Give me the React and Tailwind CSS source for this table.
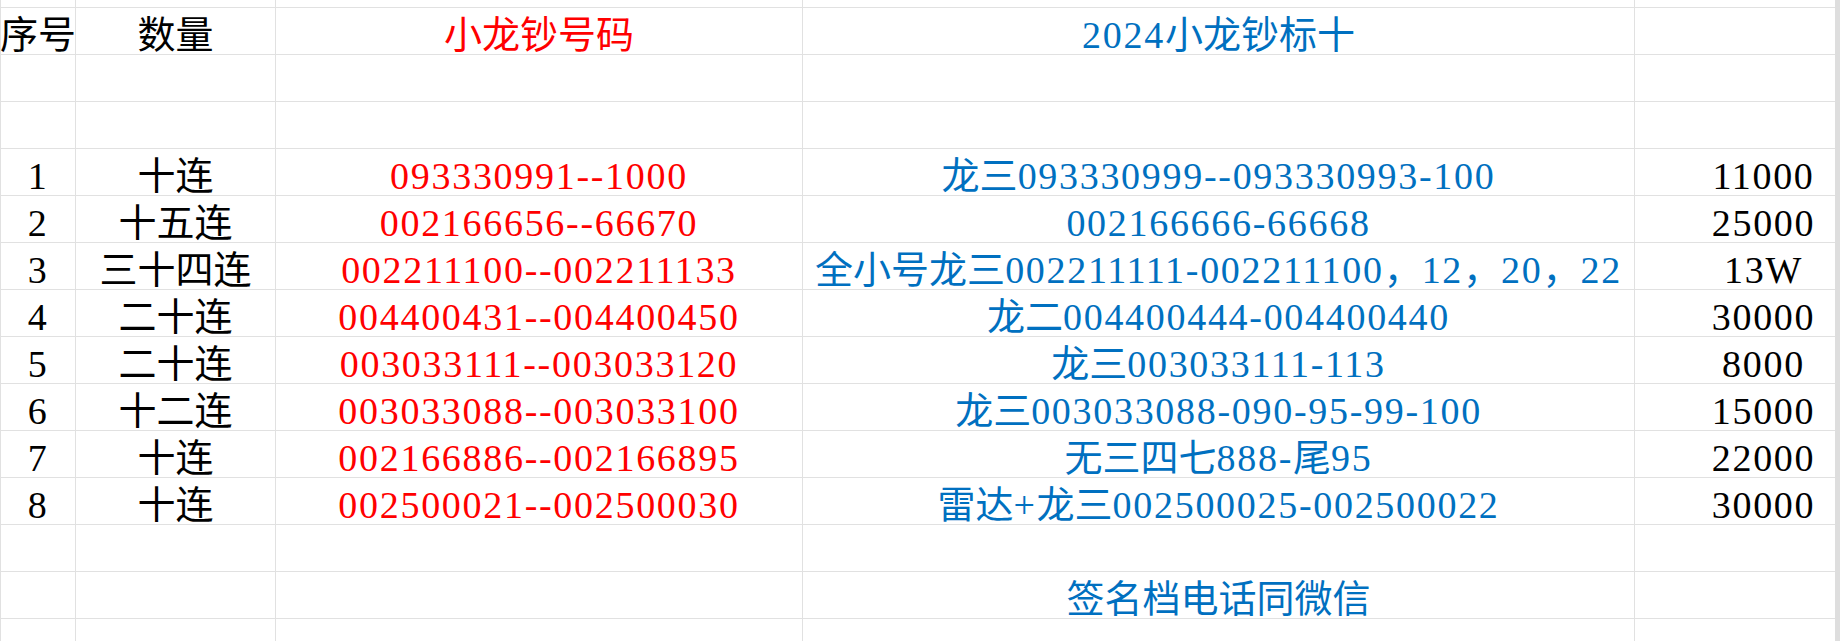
import React from "react";

const RED = "text-[#ff0000]";
const BLUE = "text-[#0070c0]";
const BLACK = "text-black";

// widths of the sheet columns (border-box, right border included)
const cols = ["w-[76px] border-l", "w-[200px]", "w-[527px]", "w-[832px]", "w-[258px]"];

const rows = [
  ["1", "十连", "093330991--1000", "龙三093330999--093330993-100", "11000"],
  ["2", "十五连", "002166656--66670", "002166666-66668", "25000"],
  ["3", "三十四连", "002211100--002211133", "全小号龙三002211111-002211100，12，20，22", "13W"],
  ["4", "二十连", "004400431--004400450", "龙二004400444-004400440", "30000"],
  ["5", "二十连", "003033111--003033120", "龙三003033111-113", "8000"],
  ["6", "十二连", "003033088--003033100", "龙三003033088-090-95-99-100", "15000"],
  ["7", "十连", "002166886--002166895", "无三四七888-尾95", "22000"],
  ["8", "十连", "002500021--002500030", "雷达+龙三002500025-002500022", "30000"],
];

// ascii runs get a little tracking so the digits sit as wide as the sheet's half-width ones
const Txt = ({ text }) => {
  const parts = text.split(/([\x00-\x7F]+)/).filter(Boolean);
  return parts.map((p, i) =>
    /^[\x00-\x7F]+$/.test(p) ? (
      <span key={i} className="tracking-[1.7px]">
        {p}
      </span>
    ) : (
      <span key={i}>{p}</span>
    )
  );
};

const Row = ({ cells = [], colors = [], h = "h-[47px]" }) => (
  <div className={`flex ${h} border-b border-[#e1e1e1]`}>
    {cols.map((w, i) => (
      <div
        key={i}
        className={`${w} shrink-0 border-r border-[#e1e1e1] flex items-end justify-center whitespace-nowrap ${colors[i] || BLACK}`}
      >
        {cells[i] ? (
          <div className="leading-[38px]">
            <Txt text={cells[i]} />
          </div>
        ) : null}
      </div>
    ))}
  </div>
);

export default function App() {
  return (
    <div className="flex h-[641px] w-[1840px] overflow-hidden bg-white font-['Liberation_Serif','Noto_Sans_CJK_SC',serif] text-[38px]">
      <div className="flex-1 overflow-hidden">
        <Row h="h-[8px]" />
        <Row cells={["序号", "数量", "小龙钞号码", "2024小龙钞标十", ""]} colors={[BLACK, BLACK, RED, BLUE, BLACK]} />
        <Row />
        <Row />
        {rows.map((r) => (
          <Row key={r[0]} cells={r} colors={[BLACK, BLACK, RED, BLUE, BLACK]} />
        ))}
        <Row />
        <Row cells={["", "", "", "签名档电话同微信", ""]} colors={[BLACK, BLACK, RED, BLUE, BLACK]} />
        <Row />
      </div>
      <div className="w-[5px] shrink-0 bg-[#dedede]" />
    </div>
  );
}
